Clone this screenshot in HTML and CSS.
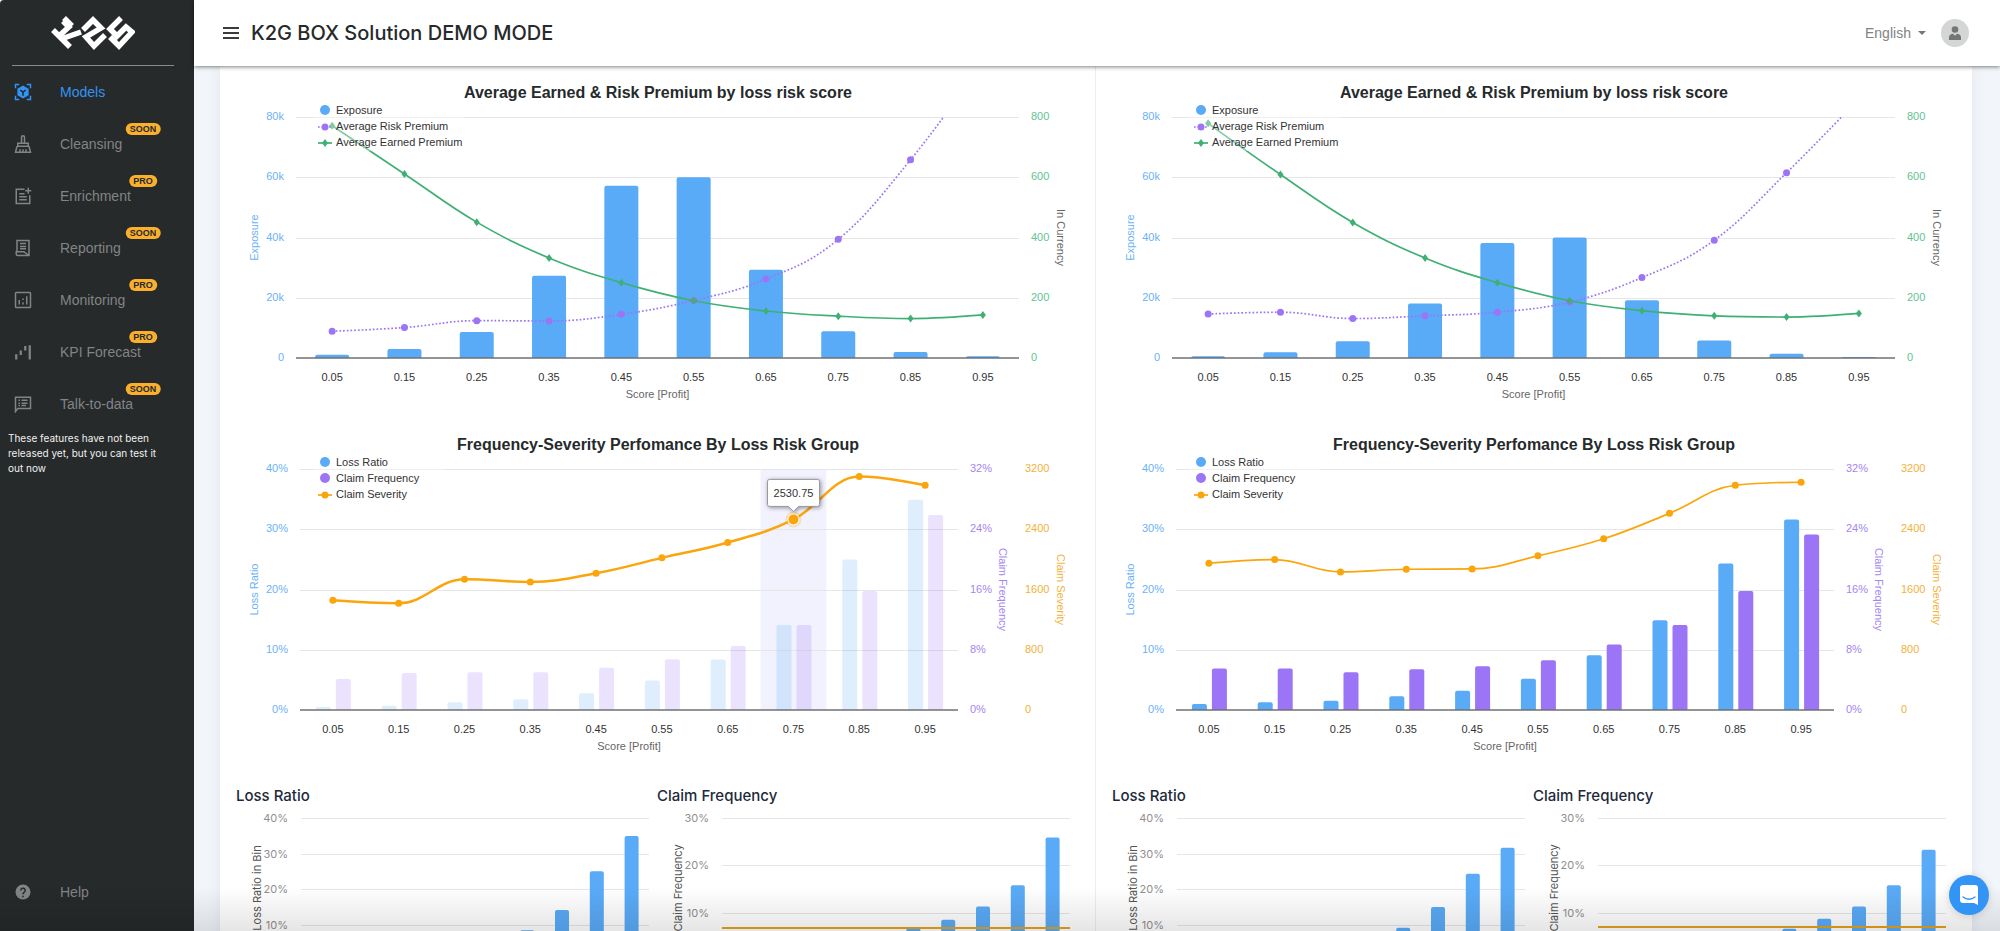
FILE: index.html
```html
<!DOCTYPE html>
<html lang="en">
<head>
<meta charset="utf-8">
<title>K2G BOX Solution</title>
<link rel="stylesheet" href="styles.css">
</head>
<body>
<div class="app">
  <aside class="sidebar">
    <a class="logo" href="#" aria-label="K2G">
      <svg width="84" height="34" viewBox="0 0 84 34" fill="none" stroke="#fff" stroke-width="5.500">
        <path d="M2 14l17 17M8 20L20 9M13 2l8 8M13 22l17-6M15 6l-3 3"/>
        <path d="M32 14L42 4l8 8-15 9 8 9 11-11"/>
        <path d="M70 2L59 13l7 7 9-9 6 5-13 14-9-9"/>
      </svg>
    </a>
    <nav class="nav">
      <a class="nav-item active" href="#">
        <svg class="nav-icon" viewBox="0 0 24 24" fill="none" stroke="currentColor" stroke-width="2"><path d="M2 7V2h5M17 2h5v5M22 17v5h-5M7 22H2v-5"/><path d="M12 4.500l6.500 3.700v7.600L12 19.500l-6.500-3.700V8.200z" fill="currentColor" stroke="currentColor"/><path d="M8.500 9.500L12 12l3.500-2.500M12 12v5" stroke="#262a2b" stroke-width="2"/></svg>
        <span>Models</span></a>
      <a class="nav-item" href="#">
        <svg class="nav-icon" viewBox="0 0 24 24" fill="none" stroke="currentColor" stroke-width="2"><path d="M10 11V3a2 2 0 0 1 4 0v8M5 11h14v4H5zM4 15L2 23h20l-2-8M8 23v-4M12 23v-4M16 23v-4"/></svg>
        <span>Cleansing</span><span class="badge">SOON</span></a>
      <a class="nav-item" href="#">
        <svg class="nav-icon" viewBox="0 0 24 24" fill="none" stroke="currentColor" stroke-width="2"><path d="M14 3H3v19h18V11M7 9h7M7 13h10M7 17h10M19 1v8M15 5h8"/></svg>
        <span>Enrichment</span><span class="badge">PRO</span></a>
      <a class="nav-item" href="#">
        <svg class="nav-icon" viewBox="0 0 24 24" fill="none" stroke="currentColor" stroke-width="2"><path d="M4 17V2h16v20H5a2 2 0 0 1-2-2v-3h10l7 5M8 6h8M8 10h8M8 13h8"/></svg>
        <span>Reporting</span><span class="badge">SOON</span></a>
      <a class="nav-item" href="#">
        <svg class="nav-icon" viewBox="0 0 24 24" fill="none" stroke="currentColor" stroke-width="2"><rect x="2" y="2" width="20" height="20" rx="1"/><path d="M7 18v-6M12 18v-3M12 12v-2M17 18V7"/></svg>
        <span>Monitoring</span><span class="badge">PRO</span></a>
      <a class="nav-item" href="#">
        <svg class="nav-icon" viewBox="0 0 24 24" fill="none" stroke="currentColor" stroke-width="3"><path d="M3 15v7M9 10v6M15 4v6M21 3v19"/></svg>
        <span>KPI Forecast</span><span class="badge">PRO</span></a>
      <a class="nav-item" href="#">
        <svg class="nav-icon" viewBox="0 0 24 24" fill="none" stroke="currentColor" stroke-width="2"><path d="M2 22V3h20v15H5zM6 7h2M6 11h2M6 14h2M10 7h8M10 11h8M10 14h6"/></svg>
        <span>Talk-to-data</span><span class="badge">SOON</span></a>
    </nav>
    <p class="nav-note">These features have not been released yet, but you can test it out now</p>
    <a class="nav-item help" href="#">
      <svg class="nav-icon" viewBox="0 0 24 24"><circle cx="12" cy="12" r="10" fill="currentColor"/><path d="M9 10a3 3 0 1 1 4.500 2.500C12.300 13.200 12 13.600 12 15M12 17v2" fill="none" stroke="#262a2b" stroke-width="2"/></svg>
      <span>Help</span></a>
  </aside>

  <div class="page">
    <header class="topbar">
      <button class="menu-button" type="button" aria-label="Toggle menu">
        <svg width="16" height="12" viewBox="0 0 16 12" stroke="#3b3b3b" stroke-width="2"><path d="M0 1h16M0 6h16M0 11h16"/></svg>
      </button>
      <h1 class="title">K2G BOX Solution DEMO MODE</h1>
      <label class="language">
        <select aria-label="Language"><option>English</option></select>
        <svg width="8" height="4" viewBox="0 0 8 4" fill="#777"><path d="M0 0h8L4 4z"/></svg>
      </label>
      <button class="avatar" type="button" aria-label="Account">
        <svg width="12" height="14" viewBox="0 0 12 14" fill="#757575"><circle cx="6" cy="3.500" r="3.300"/><path d="M0 14v-2.500C0 9 2 8 4 7.800l2 2 2-2c2 .2 4 1.200 4 3.700V14z"/></svg>
      </button>
    </header>

    <main class="content">
      <div class="card">
        <section class="panel">
          <h2 class="chart-title">Average Earned &amp; Risk Premium by loss risk score</h2>
          <div class="chart" data-kind="premium" data-set="a"></div>
          <h2 class="chart-title">Frequency-Severity Perfomance By Loss Risk Group</h2>
          <div class="chart" data-kind="severity" data-set="a"></div>
          <div class="pair">
            <div><h3 class="sub-title">Loss Ratio</h3><div class="chart small" data-kind="loss" data-set="a"></div></div>
            <div><h3 class="sub-title">Claim Frequency</h3><div class="chart small" data-kind="frequency" data-set="a"></div></div>
          </div>
        </section>
        <section class="panel">
          <h2 class="chart-title">Average Earned &amp; Risk Premium by loss risk score</h2>
          <div class="chart" data-kind="premium" data-set="b"></div>
          <h2 class="chart-title">Frequency-Severity Perfomance By Loss Risk Group</h2>
          <div class="chart" data-kind="severity" data-set="b"></div>
          <div class="pair">
            <div><h3 class="sub-title">Loss Ratio</h3><div class="chart small" data-kind="loss" data-set="b"></div></div>
            <div><h3 class="sub-title">Claim Frequency</h3><div class="chart small" data-kind="frequency" data-set="b"></div></div>
          </div>
        </section>
      </div>
    </main>
  </div>
</div>
<div class="fade"></div>
<button class="chat" type="button" aria-label="Open chat">
  <svg width="18" height="20" viewBox="0 0 18 20"><path d="M3 0h12a3 3 0 0 1 3 3v17l-4-2H3a3 3 0 0 1-3-3V3a3 3 0 0 1 3-3z" fill="#fff"/><path d="M3 12c3.500 3 8.500 3 12 0" fill="none" stroke="#3294f4" stroke-width="1.300" stroke-linecap="round"/></svg>
</button>
<script src="charts.js"></script>
</body>
</html>
```
FILE: styles.css
```css
* { box-sizing: border-box; }
body {
  margin: 0;
  background: #f2f6fb;
  font-family: "Liberation Sans", Arial, sans-serif;
  color: #262a2b;
}
button { border: 0; padding: 0; background: none; cursor: pointer; }
a { color: inherit; text-decoration: none; }

.app { display: flex; height: 100vh; overflow: hidden; }

.sidebar {
  width: 194px;
  flex: none;
  display: flex;
  flex-direction: column;
  background: #262a2b;
  color: #828485;
  border-top-left-radius: 4px;
}
.logo {
  display: flex;
  justify-content: center;
  margin: 0 20px 0 12px;
  padding: 16px 0 15px;
  border-bottom: 1px solid #8a8b8c;
}
.nav-item {
  position: relative;
  display: flex;
  align-items: center;
  gap: 28px;
  height: 52px;
  padding-left: 14px;
  font-size: 14px;
}
.nav-item.active { color: #3294f4; }
.nav-icon { width: 18px; height: 18px; flex: none; }
.badge {
  position: absolute;
  left: 143px;
  top: 5px;
  transform: translateX(-50%);
  padding: 0 4px;
  border-radius: 6px;
  background: #fbb02d;
  color: #262a2b;
  font-size: 9px;
  line-height: 12px;
  font-weight: 700;
}
.nav-note {
  margin: 0 20px 0 8px;
  padding-top: 1px;
  color: #f0f0f0;
  font: 10px/15px Inter, sans-serif;
}
.help { margin-top: auto; margin-bottom: 13px; }

.page { flex: 1; min-width: 0; display: flex; flex-direction: column; }
.topbar {
  position: relative;
  z-index: 1;
  flex: none;
  display: flex;
  align-items: center;
  height: 66px;
  padding: 0 31px 0 29px;
  background: #fff;
  box-shadow: 0 1px 4px rgba(0, 0, 0, .5);
}
.menu-button { display: flex; }
.title { margin: 0 auto 0 12px; font: 500 20px/24px Inter, sans-serif; }
.language { position: relative; display: flex; align-items: center; margin-right: 15px; }
.language select {
  appearance: none;
  border: 0;
  padding: 0 15px 0 0;
  background: none;
  color: #828282;
  font: 14px/20px "Liberation Sans", Arial, sans-serif;
}
.language svg { position: absolute; right: 0; pointer-events: none; }
.avatar {
  display: flex;
  align-items: center;
  justify-content: center;
  width: 28px;
  height: 28px;
  border-radius: 50%;
  background: #d4d5d5;
}

.content { flex: 1; min-height: 0; overflow: hidden; padding: 0 28px 0 26px; }
.card {
  display: grid;
  grid-template-columns: 1fr 1fr;
  background: #fff;
  box-shadow: 0 0 14px rgba(0, 0, 0, .07);
}
.panel { min-width: 0; padding-top: 2px; }
.panel + .panel { box-shadow: -1px 0 #eee; }
.chart-title {
  margin: 0;
  padding-top: 13px;
  font-size: 16px;
  line-height: 24px;
  text-align: center;
}
.chart { height: 315px; overflow: hidden; }
.pair { display: grid; grid-template-columns: 1fr 1fr; padding: 8px 18px 0 16px; }
.pair > div { min-width: 0; }
.sub-title { margin: 0; font: 500 15px/32px Inter, sans-serif; color: #1d2a3b; }
.small { height: 190px; }

.chart svg { display: block; font-size: 11px; }
.grid { stroke: #e6e6e6; }
.base { stroke: #6e7072; stroke-width: 1.500; }
.blue { fill: #5aabf7; }
.purple { fill: #9b75f5; }
.faded { opacity: .2; }
.band { fill: #f1f2fe; }
.t-blue { fill: #6cb2f5; }
.t-purple { fill: #a585f0; }
.t-green { fill: #62c491; }
.t-orange { fill: #f4b13a; }
.t-dark { fill: #333; }
.t-gray { fill: #666; }
.t-light { fill: #8f8f8f; font-family: Inter, sans-serif; }
.t-axis { fill: #555; font-family: Inter, sans-serif; }
.line { fill: none; stroke-width: 1.700; }
.line.green { stroke: #3fb074; }
.line.violet { stroke: #9b75f5; stroke-dasharray: 1.700 2; }
.line.orange { stroke: #fba50c; }
.line.thick { stroke-width: 2.500; }
.dot-green { fill: #3fb074; }
.dot-orange { fill: #fba50c; }
.legend-back { fill: #fff; opacity: .35; }
.halo { fill: #fba50c; opacity: .25; }
.ring { fill: #fff; }
.tip { fill: #fff; stroke: #999; filter: drop-shadow(1px 1px 2px rgba(0, 0, 0, .4)); }
.average { stroke: #e5a21a; stroke-width: 2; }

.fade {
  position: fixed;
  left: 0;
  right: 0;
  bottom: 0;
  height: 44px;
  background: linear-gradient(rgba(0, 0, 0, 0), rgba(0, 0, 0, .1));
  pointer-events: none;
}
.chat {
  position: fixed;
  right: 11px;
  bottom: 16px;
  display: flex;
  align-items: center;
  justify-content: center;
  width: 40px;
  height: 40px;
  border-radius: 50%;
  background: #3294f4;
  box-shadow: 0 1px 8px rgba(0, 0, 0, .15);
}
```
FILE: charts.js
```javascript
const SCORES = ['0.05', '0.15', '0.25', '0.35', '0.45', '0.55', '0.65', '0.75', '0.85', '0.95'];
const DATA = {
  a: {
    exposure: [1.1, 3, 8.6, 27.3, 57.2, 60, 29.3, 8.9, 2, 0.6],
    risk: [89, 101, 124, 123, 145, 191, 262, 394, 658, 980],
    earned: [771, 611, 451, 332, 250, 190, 156, 139, 131, 143],
    loss: [0.5, 0.7, 1.3, 1.8, 2.8, 4.9, 8.4, 14.1, 25, 34.9],
    frequency: [4.1, 4.9, 5, 5, 5.6, 6.75, 8.5, 11.3, 15.8, 25.9],
    severity: [1456, 1416, 1736, 1700, 1816, 2020, 2224, 2530.75, 3099, 2984],
    average: 6.7, hover: 7
  },
  b: {
    exposure: [0.6, 1.9, 5.6, 18.1, 38.2, 40, 19.2, 5.8, 1.4, 0.3],
    risk: [146, 152, 131, 140, 152, 186, 267, 391, 615, 860],
    earned: [779, 609, 450, 332, 250, 190, 157, 140, 136, 148],
    loss: [1, 1.3, 1.55, 2.3, 3.2, 5.2, 9.1, 14.9, 24.3, 31.6],
    frequency: [5.5, 5.5, 5, 5.4, 5.8, 6.6, 8.7, 11.3, 15.8, 23.3],
    severity: [1949, 1998, 1834, 1869, 1873, 2047, 2273, 2611, 2984, 3024],
    average: 6.9, hover: -1
  }
};

const text = (x, y, s, cls, anchor = 'start', turn = 0) =>
  `<text x="${x}" y="${y}" dy="4" class="${cls}" text-anchor="${anchor}"` +
  (turn ? ` transform="rotate(${turn} ${x} ${y})"` : '') + `>${s}</text>`;

const bar = (x, w, y, base, cls) => {
  const r = Math.min(2, base - y);
  return `<path class="${cls}" d="M${x} ${base}V${y + r}q0 ${-r} ${r} ${-r}h${w - 2 * r}q${r} 0 ${r} ${r}V${base}z"/>`;
};

// Spline whose control points never overshoot the neighbouring values.
function spline(p) {
  let d = `M${p[0].x} ${p[0].y}`;
  let out = p[0];
  for (let i = 1; i < p.length; i++) {
    const cur = p[i], last = p[i - 1], next = p[i + 1];
    let l = cur, r = cur;
    if (next) {
      l = { x: (1.5 * cur.x + last.x) / 2.5, y: (1.5 * cur.y + last.y) / 2.5 };
      r = { x: (1.5 * cur.x + next.x) / 2.5, y: (1.5 * cur.y + next.y) / 2.5 };
      const c = (r.y - l.y) * (r.x - cur.x) / (r.x - l.x) + cur.y - r.y;
      l.y += c; r.y += c;
      const lo = Math.min(last.y, cur.y), hi = Math.max(last.y, cur.y);
      if (l.y > hi || l.y < lo) { l.y = l.y > hi ? hi : lo; r.y = 2 * cur.y - l.y; }
      const lo2 = Math.min(next.y, cur.y), hi2 = Math.max(next.y, cur.y);
      if (r.y > hi2 || r.y < lo2) { r.y = r.y > hi2 ? hi2 : lo2; l.y = 2 * cur.y - r.y; }
    }
    d += `C${out.x} ${out.y} ${l.x} ${l.y} ${cur.x} ${cur.y}`;
    out = r;
  }
  return d;
}

const diamond = (x, y) => `<path class="dot-green" d="M${x} ${y - 4}l3 4-3 4-3-4z"/>`;
const dot = (x, y, cls) => `<circle class="${cls}" cx="${x}" cy="${y}" r="3.5"/>`;

function frame(x0, x1, top, height, steps) {
  let s = '';
  for (let i = 0; i < steps; i++) {
    const y = Math.round(top + height * i / steps) + 0.5;
    s += `<path class="grid" d="M${x0} ${y}H${x1}"/>`;
  }
  return s;
}

function categories(x0, step, base) {
  return SCORES.map((c, i) => text(x0 + step * (i + 0.5), base + 19, c, 't-dark', 'middle')).join('') +
    text(x0 + step * 5, base + 36, 'Score [Profit]', 't-gray', 'middle');
}

function premium(w, d) {
  const x0 = 76, x1 = w - 77, top = 12, h = 241, base = top + h, step = (x1 - x0) / 10;
  const cx = i => x0 + step * (i + 0.5);
  const points = v => v.map((n, i) => ({ x: cx(i), y: base - n / 800 * h }));
  const risk = points(d.risk), earned = points(d.earned);
  const clip = 'clip-' + d.average * 10;
  let s = `<clipPath id="${clip}"><rect x="${x0}" y="${top}" width="${x1 - x0}" height="${h}"/></clipPath>`;
  s += frame(x0, x1, top, h, 4);
  d.exposure.forEach((v, i) => { s += bar(cx(i) - 17, 34, base - v / 80 * h, base, 'blue'); });
  s += `<path class="base" d="M${x0} ${base}H${x1}"/>`;
  s += `<g clip-path="url(#${clip})"><path class="line violet" d="${spline(risk)}"/></g>`;
  risk.forEach(p => { if (p.y > top) s += dot(p.x, p.y, 'purple'); });
  s += `<path class="line green" d="${spline(earned)}"/>` + earned.map(p => diamond(p.x, p.y)).join('');
  for (let i = 0; i < 5; i++) {
    const y = top + h * i / 4 - 1;
    s += text(x0 - 12, y, i === 4 ? '0' : (80 - 20 * i) + 'k', 't-blue', 'end');
    s += text(x1 + 12, y, 800 - 200 * i, 't-green');
  }
  s += text(34, base - h / 2, 'Exposure', 't-blue', 'middle', -90);
  s += text(w - 35, base - h / 2, 'In Currency', 't-gray', 'middle', 90);
  s += `<rect class="legend-back" x="${x0 + 18}" y="0" width="150" height="46"/>`;
  s += `<circle class="blue" cx="105" cy="5" r="5"/><path class="line violet" d="M98 22h13"/>` +
    dot(105, 22, 'purple') + `<path class="line green" d="M98 38h14"/>` + diamond(105, 38);
  s += text(116, 5, 'Exposure', 't-dark') + text(116, 21, 'Average Risk Premium', 't-dark') +
    text(116, 37, 'Average Earned Premium', 't-dark');
  return s + categories(x0, step, base);
}

function severity(w, d) {
  const x0 = 80, x1 = w - 138, top = 12, h = 241, base = top + h, step = (x1 - x0) / 10;
  const cx = i => x0 + step * (i + 0.5);
  const hovered = d.hover >= 0;
  const fade = hovered ? ' faded' : '';
  let s = '';
  if (hovered) s += `<rect class="band" x="${x0 + step * d.hover}" y="${top}" width="${step}" height="${h}"/>`;
  s += frame(x0, x1, top, h, 4);
  SCORES.forEach((c, i) => {
    s += bar(cx(i) - 17, 15, base - d.loss[i] / 40 * h, base, 'blue' + fade);
    s += bar(cx(i) + 3, 15, base - d.frequency[i] / 32 * h, base, 'purple' + fade);
  });
  s += `<path class="base" d="M${x0} ${base}H${x1}"/>`;
  const p = d.severity.map((n, i) => ({ x: cx(i), y: base - n / 3200 * h }));
  s += `<path class="line orange${hovered ? ' thick' : ''}" d="${spline(p)}"/>`;
  s += p.map(q => dot(q.x, q.y, 'dot-orange')).join('');
  if (hovered) {
    const q = p[d.hover];
    s += `<circle class="halo" cx="${q.x}" cy="${q.y}" r="8"/><circle class="ring" cx="${q.x}" cy="${q.y}" r="6"/>` +
      `<circle class="dot-orange" cx="${q.x}" cy="${q.y}" r="5"/>`;
    s += `<path class="tip" d="M${q.x} ${q.y - 8}l-5-5h-19q-2 0-2-2v-23q0-2 2-2h48q2 0 2 2v23q0 2-2 2h-19z"/>`;
    s += text(q.x, q.y - 26, d.severity[d.hover], 't-dark', 'middle');
  }
  for (let i = 0; i < 5; i++) {
    const y = top + h * i / 4 - 1;
    s += text(x0 - 12, y, (40 - 10 * i) + '%', 't-blue', 'end');
    s += text(x1 + 12, y, (32 - 8 * i) + '%', 't-purple');
    s += text(x1 + 67, y, 3200 - 800 * i, 't-orange');
  }
  const mid = base - h / 2;
  s += text(34, mid, 'Loss Ratio', 't-blue', 'middle', -90);
  s += text(x1 + 45, mid, 'Claim Frequency', 't-purple', 'middle', 90);
  s += text(w - 35, mid, 'Claim Severity', 't-orange', 'middle', 90);
  s += `<rect class="legend-back" x="${x0 + 14}" y="0" width="130" height="46"/>`;
  s += `<circle class="blue" cx="105" cy="5" r="5"/><circle class="purple" cx="105" cy="21" r="5"/>` +
    `<path class="line orange" d="M98 38h14"/>` + dot(105, 38, 'dot-orange');
  s += text(116, 5, 'Loss Ratio', 't-dark') + text(116, 21, 'Claim Frequency', 't-dark') +
    text(116, 37, 'Claim Severity', 't-dark');
  return s + categories(x0, step, base);
}

function small(w, values, max, title, average) {
  const x0 = 65, x1 = w - 8, top = 6, h = 142, base = top + h, step = (x1 - x0) / 10, n = max / 10;
  let s = frame(x0, x1, top, h, n);
  values.forEach((v, i) => { s += bar(x0 + step * (i + 0.5) - 7, 14, base - v / max * h, base, 'blue'); });
  for (let i = 0; i < n; i++) s += text(x0 - 13, top + h * i / n, (max - 10 * i) + '%', 't-light', 'end');
  if (average) {
    const y = Math.round(base - average / max * h);
    s += `<path class="average" d="M${x0} ${y}H${x1}"/>`;
  }
  return s + text(21, top + h / 2 - 1, title, 't-axis', 'middle', -90);
}

function draw() {
  document.querySelectorAll('.chart').forEach(el => {
    const w = el.clientWidth, h = el.clientHeight, d = DATA[el.dataset.set];
    const body = {
      premium: () => premium(w, d),
      severity: () => severity(w, d),
      loss: () => small(w, d.loss, 40, 'Loss Ratio in Bin'),
      frequency: () => small(w, d.frequency, 30, 'Claim Frequency', d.average)
    }[el.dataset.kind]();
    el.innerHTML = `<svg width="${w}" height="${h}">${body}</svg>`;
  });
}
draw();
window.addEventListener('resize', draw);
```
